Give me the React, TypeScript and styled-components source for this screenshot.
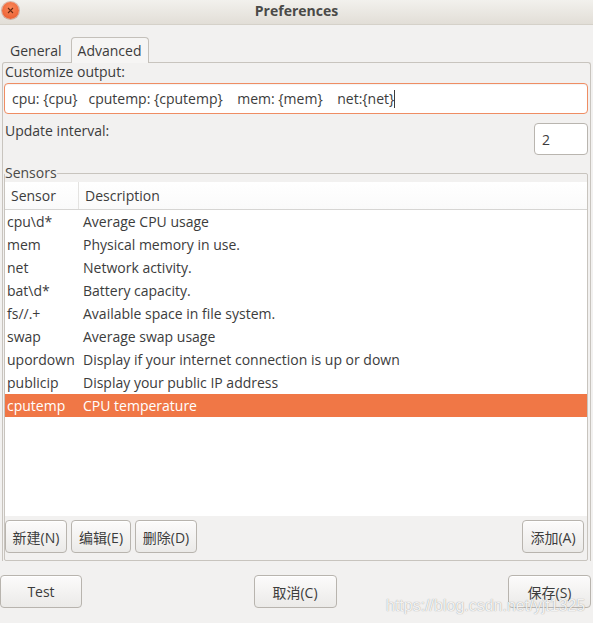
import styled, { createGlobalStyle } from "styled-components";

const GlobalStyle = createGlobalStyle`
  html, body {
    margin: 0;
    padding: 0;
    background: #f2f1f0;
  }
  body {
    font-family: "Open Sans", "Noto Sans", "Noto Sans CJK SC", sans-serif;
    font-size: 14px;
    color: #3c3c3c;
  }
`;

const Window = styled.div`
  position: relative;
  width: 593px;
  height: 623px;
  background: #f2f1f0;
  overflow: hidden;
  display: flex;
  flex-direction: column;
`;

const TitleBar = styled.div`
  height: 25px;
  box-sizing: border-box;
  padding-bottom: 3px;
  border-bottom: 1px solid #d5d1c9;
  background: linear-gradient(#f2f1ed, #e2ded7);
  display: flex;
  align-items: center;
  justify-content: center;
  position: relative;
`;

const CloseButton = styled.div`
  position: absolute;
  left: 2px;
  top: 2px;
  width: 17px;
  height: 17px;
  border-radius: 50%;
  background: radial-gradient(circle at 50% 35%, #f9885a, #e9582b);
  box-shadow: 0 0 0 1px rgba(160, 70, 40, 0.35);
  display: flex;
  align-items: center;
  justify-content: center;
`;

const Title = styled.div`
  font-weight: bold;
  font-size: 14px;
  color: #4a4a48;
`;

const Notebook = styled.div`
  margin-top: 11px;
  display: flex;
  flex-direction: column;
`;

const TabRow = styled.div`
  display: flex;
  align-items: flex-end;
  padding-left: 3px;
  height: 26px;
`;

const Tab = styled.div<{ $active?: boolean }>`
  height: 26px;
  box-sizing: border-box;
  padding: 0 7px 0 6px;
  margin-right: 1px;
  display: flex;
  align-items: center;
  border: 1px solid ${(p) => (p.$active ? "#c4c0ba" : "transparent")};
  border-bottom: none;
  border-radius: 4px 4px 0 0;
  background: ${(p) => (p.$active ? "#f6f5f4" : "transparent")};
  position: relative;
  top: 1px;
`;

const Page = styled.div`
  margin: 0 2px;
  border: 1px solid #c8c4be;
  border-bottom: none;
  border-radius: 3px 3px 0 0;
  padding: 0 1px;
  display: flex;
  flex-direction: column;
`;

const Label = styled.div`
  line-height: 18px;
  padding-left: 1px;
`;

const Entry = styled.div`
  height: 31px;
  box-sizing: border-box;
  margin-top: 2px;
  margin-right: 1px;
  border: 1px solid #ef8d63;
  border-radius: 4px;
  background: #ffffff;
  display: flex;
  align-items: center;
  padding-left: 7px;
  white-space: pre;
  box-shadow: inset 0 1px 1px rgba(0, 0, 0, 0.05);
`;

const Caret = styled.span`
  display: inline-block;
  width: 1px;
  height: 18px;
  background: #3c3c3c;
  vertical-align: middle;
`;

const IntervalRow = styled.div`
  display: flex;
  justify-content: space-between;
  align-items: flex-start;
  margin-top: 8px;
`;

const SpinBox = styled.div`
  width: 54px;
  height: 32px;
  box-sizing: border-box;
  margin-top: 1px;
  margin-right: 1px;
  border: 1px solid #b9b5af;
  border-radius: 4px;
  background: #ffffff;
  display: flex;
  align-items: center;
  padding-left: 7px;
`;

const Frame = styled.fieldset`
  margin: 10px 1px 0 0;
  padding: 0;
  border: 1px solid #c8c4be;
  border-radius: 2px;
  min-width: 0;
  display: flex;
  flex-direction: column;
`;

const Legend = styled.legend`
  padding: 0;
  margin-left: 0;
  line-height: 16px;
  color: #4a4a48;
`;

const Tree = styled.div`
  margin-top: 1px;
  background: #ffffff;
  height: 334px;
  display: flex;
  flex-direction: column;
`;

const HeaderRow = styled.div`
  display: flex;
  height: 28px;
  box-sizing: border-box;
  border-bottom: 1px solid #d6d5d3;
  background: linear-gradient(#ffffff, #fafafa);
`;

const HeaderCell = styled.div<{ $w?: number }>`
  width: ${(p) => (p.$w ? `${p.$w}px` : "auto")};
  flex: ${(p) => (p.$w ? "none" : "1")};
  box-sizing: border-box;
  display: flex;
  align-items: center;
  padding-left: 6px;
  border-right: ${(p) => (p.$w ? "1px solid #e4e3e1" : "none")};
`;

const Row = styled.div<{ $selected?: boolean }>`
  display: flex;
  height: 23px;
  align-items: center;
  background: ${(p) => (p.$selected ? "#f07746" : "transparent")};
  color: ${(p) => (p.$selected ? "#ffffff" : "#3c3c3c")};
`;

const Cell = styled.div<{ $w?: number }>`
  width: ${(p) => (p.$w ? `${p.$w}px` : "auto")};
  flex: ${(p) => (p.$w ? "none" : "1")};
  padding-left: 2px;
  white-space: nowrap;
`;

const ButtonBar = styled.div`
  display: flex;
  align-items: center;
  gap: 4px;
  padding: 4px 3px 7px 0;
`;

const Spacer = styled.div`
  flex: 1;
`;

const Button = styled.button<{ $w?: number }>`
  width: ${(p) => (p.$w ? `${p.$w}px` : "auto")};
  height: 33px;
  padding: 0 5px;
  box-sizing: border-box;
  border: 1px solid #b8b4ae;
  border-radius: 4px;
  background: linear-gradient(#fcfbfb, #ebeae8);
  box-shadow: inset 0 1px 0 #ffffff;
  font-family: "Open Sans", "Noto Sans CJK SC", sans-serif;
  font-size: 14px;
  color: #3c3c3c;
`;

const Footer = styled.div`
  display: flex;
  justify-content: space-between;
  align-items: center;
  padding: 14px 2px 0 0;
`;

const Watermark = styled.div`
  position: absolute;
  left: 386px;
  top: 597px;
  font-family: "Liberation Sans", Arial, sans-serif;
  font-size: 16px;
  color: rgba(255, 255, 255, 0.9);
  text-shadow: 0 0 1px rgba(110, 110, 110, 0.8);
  white-space: nowrap;
`;

const sensors = [
  ["cpu\\d*", "Average CPU usage"],
  ["mem", "Physical memory in use."],
  ["net", "Network activity."],
  ["bat\\d*", "Battery capacity."],
  ["fs//.+", "Available space in file system."],
  ["swap", "Average swap usage"],
  ["upordown", "Display if your internet connection is up or down"],
  ["publicip", "Display your public IP address"],
  ["cputemp", "CPU temperature"],
];

export default function App() {
  return (
    <>
      <GlobalStyle />
      <Window>
        <TitleBar>
          <CloseButton>
            <svg width="7" height="7" viewBox="0 0 7 7">
              <path d="M1 1L6 6M6 1L1 6" stroke="#6b2a14" strokeWidth="1.1" />
            </svg>
          </CloseButton>
          <Title>Preferences</Title>
        </TitleBar>
        <Notebook>
          <TabRow>
            <Tab>General</Tab>
            <Tab $active>Advanced</Tab>
          </TabRow>
          <Page>
            <Label>Customize output:</Label>
            <Entry>
              {"cpu: {cpu}   cputemp: {cputemp}    mem: {mem}    net:{net}"}
              <Caret />
            </Entry>
            <IntervalRow>
              <Label>Update interval:</Label>
              <SpinBox>2</SpinBox>
            </IntervalRow>
            <Frame>
              <Legend>Sensors</Legend>
              <Tree>
                <HeaderRow>
                  <HeaderCell $w={74}>Sensor</HeaderCell>
                  <HeaderCell>Description</HeaderCell>
                </HeaderRow>
                {sensors.map(([name, desc]) => (
                  <Row key={name} $selected={name === "cputemp"}>
                    <Cell $w={74}>{name}</Cell>
                    <Cell>{desc}</Cell>
                  </Row>
                ))}
              </Tree>
              <ButtonBar>
                <Button $w={62}>新建(N)</Button>
                <Button $w={60}>编辑(E)</Button>
                <Button $w={62}>删除(D)</Button>
                <Spacer />
                <Button $w={62}>添加(A)</Button>
              </ButtonBar>
            </Frame>
          </Page>
        </Notebook>
        <Footer>
          <Button $w={82}>Test</Button>
          <Button $w={83}>取消(C)</Button>
          <Button $w={83}>保存(S)</Button>
        </Footer>
        <Watermark>https://blog.csdn.net/yjt1325</Watermark>
      </Window>
    </>
  );
}
